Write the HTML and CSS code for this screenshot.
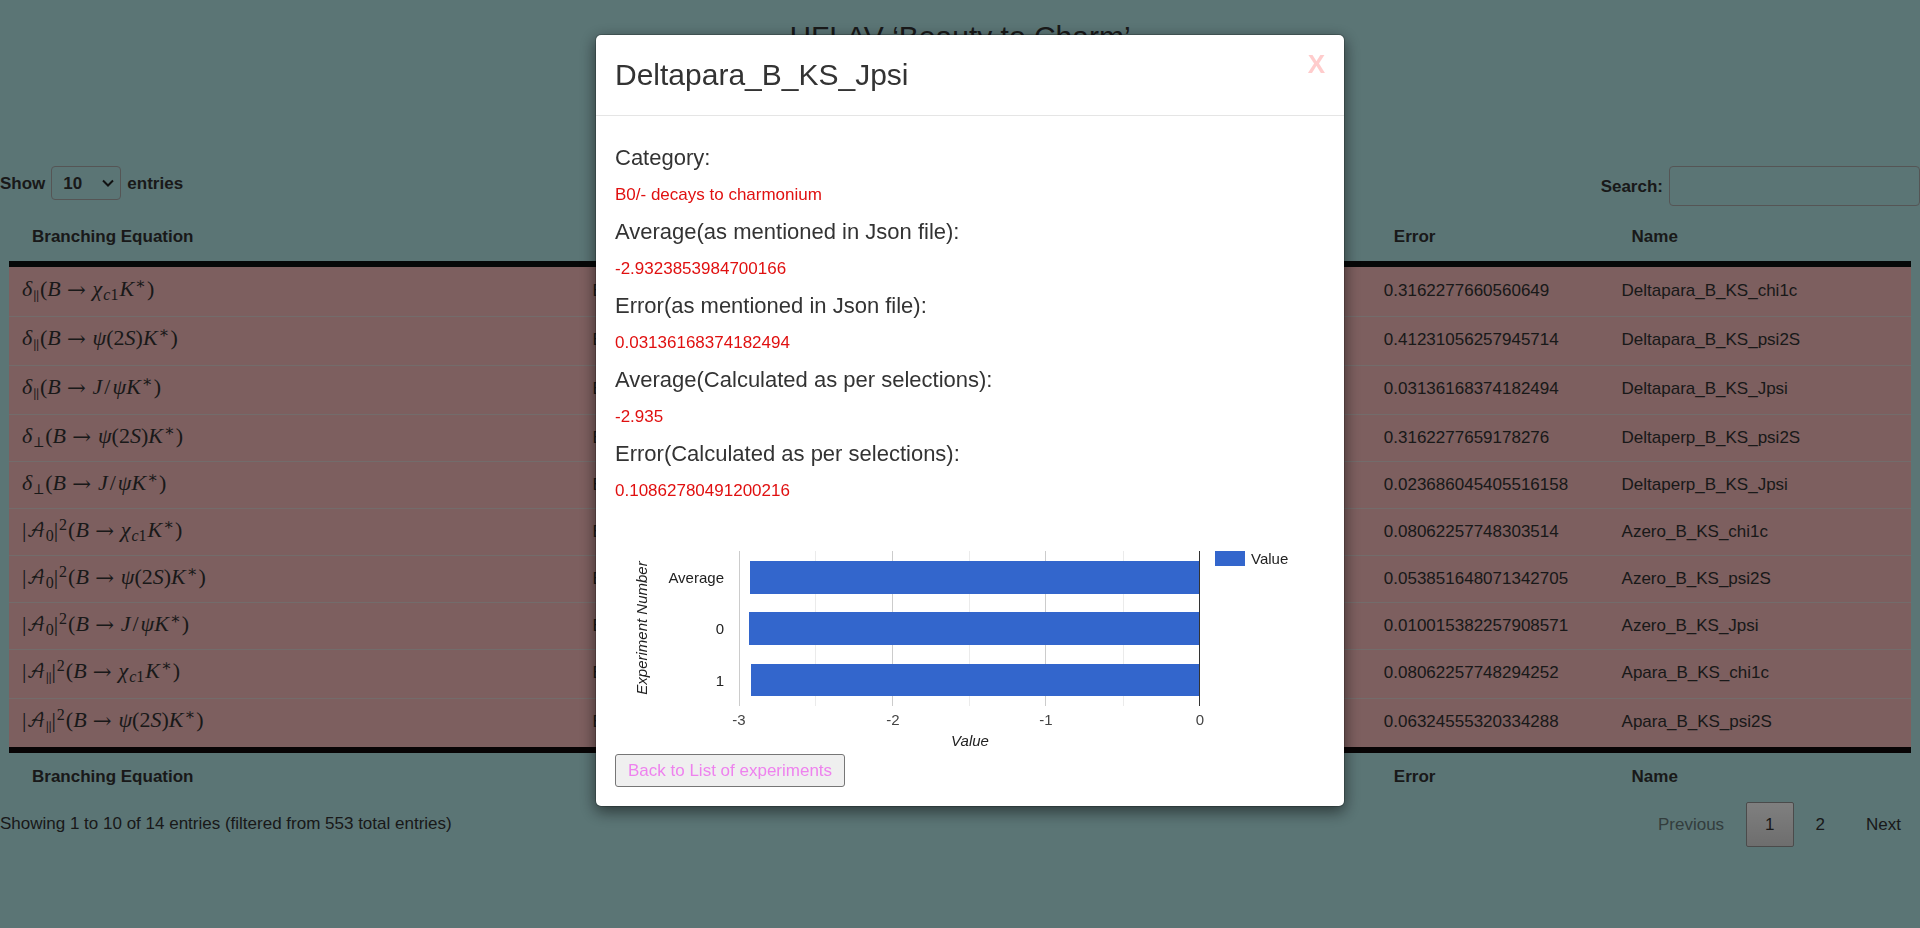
FILE: index.html
```html
<!DOCTYPE html>
<html lang="en">
<head>
<meta charset="utf-8">
<title>HFLAV ‘Beauty to Charm’</title>
<meta name="viewport" content="width=device-width, initial-scale=1">
<link rel="stylesheet" href="styles.css">
</head>
<body>
<main class="page">
  <header class="page-header"><h1>HFLAV ‘Beauty to Charm’</h1></header>

  <div class="controls">
    <label class="length">Show
      <select class="length-select"><option>10</option><option>25</option><option>50</option></select>
      entries</label>
    <label class="filter">Search:<input class="filter-input" type="search"></label>
  </div>

  <table class="results">
    <colgroup><col class="c-eq"><col class="c-cat"><col class="c-avg"><col class="c-err"><col class="c-name"></colgroup>
    <thead><tr><th>Branching Equation</th><th>Category</th><th>Average</th><th>Error</th><th>Name</th></tr></thead>
    <tbody>
      <tr class="tall"><td><span class="eq"><i>δ</i><sub class="sym">∥</sub>(<i>B</i><span class="to">→</span><i>χ</i><sub><i>c</i>1</sub><i>K</i><sup>∗</sup>)</span></td><td>B0/- decays to charmonium</td><td></td><td>0.3162277660560649</td><td>Deltapara_B_KS_chi1c</td></tr>
      <tr class="tall"><td><span class="eq"><i>δ</i><sub class="sym">∥</sub>(<i>B</i><span class="to">→</span><i>ψ</i>(2<i>S</i>)<i>K</i><sup>∗</sup>)</span></td><td>B0/- decays to charmonium</td><td></td><td>0.41231056257945714</td><td>Deltapara_B_KS_psi2S</td></tr>
      <tr class="tall"><td><span class="eq"><i>δ</i><sub class="sym">∥</sub>(<i>B</i><span class="to">→</span><i>J</i><span class="slash">/</span><i>ψK</i><sup>∗</sup>)</span></td><td>B0/- decays to charmonium</td><td>-2.9323853984700166</td><td>0.03136168374182494</td><td>Deltapara_B_KS_Jpsi</td></tr>
      <tr><td><span class="eq"><i>δ</i><sub class="sym">⊥</sub>(<i>B</i><span class="to">→</span><i>ψ</i>(2<i>S</i>)<i>K</i><sup>∗</sup>)</span></td><td>B0/- decays to charmonium</td><td></td><td>0.3162277659178276</td><td>Deltaperp_B_KS_psi2S</td></tr>
      <tr><td><span class="eq"><i>δ</i><sub class="sym">⊥</sub>(<i>B</i><span class="to">→</span><i>J</i><span class="slash">/</span><i>ψK</i><sup>∗</sup>)</span></td><td>B0/- decays to charmonium</td><td></td><td>0.023686045405516158</td><td>Deltaperp_B_KS_Jpsi</td></tr>
      <tr><td><span class="eq">|<span class="script">𝒜</span><sub>0</sub>|<sup>2</sup>(<i>B</i><span class="to">→</span><i>χ</i><sub><i>c</i>1</sub><i>K</i><sup>∗</sup>)</span></td><td>B0/- decays to charmonium</td><td></td><td>0.08062257748303514</td><td>Azero_B_KS_chi1c</td></tr>
      <tr><td><span class="eq">|<span class="script">𝒜</span><sub>0</sub>|<sup>2</sup>(<i>B</i><span class="to">→</span><i>ψ</i>(2<i>S</i>)<i>K</i><sup>∗</sup>)</span></td><td>B0/- decays to charmonium</td><td></td><td>0.053851648071342705</td><td>Azero_B_KS_psi2S</td></tr>
      <tr><td><span class="eq">|<span class="script">𝒜</span><sub>0</sub>|<sup>2</sup>(<i>B</i><span class="to">→</span><i>J</i><span class="slash">/</span><i>ψK</i><sup>∗</sup>)</span></td><td>B0/- decays to charmonium</td><td></td><td>0.010015382257908571</td><td>Azero_B_KS_Jpsi</td></tr>
      <tr class="tall"><td><span class="eq">|<span class="script">𝒜</span><sub class="sym">∥</sub>|<sup>2</sup>(<i>B</i><span class="to">→</span><i>χ</i><sub><i>c</i>1</sub><i>K</i><sup>∗</sup>)</span></td><td>B0/- decays to charmonium</td><td></td><td>0.08062257748294252</td><td>Apara_B_KS_chi1c</td></tr>
      <tr class="tall"><td><span class="eq">|<span class="script">𝒜</span><sub class="sym">∥</sub>|<sup>2</sup>(<i>B</i><span class="to">→</span><i>ψ</i>(2<i>S</i>)<i>K</i><sup>∗</sup>)</span></td><td>B0/- decays to charmonium</td><td></td><td>0.06324555320334288</td><td>Apara_B_KS_psi2S</td></tr>
    </tbody>
    <tfoot><tr><th>Branching Equation</th><th>Category</th><th>Average</th><th>Error</th><th>Name</th></tr></tfoot>
  </table>

  <div class="table-footer">
    <div class="info">Showing 1 to 10 of 14 entries (filtered from 553 total entries)</div>
    <nav class="pagination" aria-label="Pages">
      <button class="page-button disabled" type="button" disabled>Previous</button>
      <button class="page-button current" type="button" aria-current="page">1</button>
      <button class="page-button" type="button">2</button>
      <button class="page-button" type="button">Next</button>
    </nav>
  </div>
</main>

<div class="backdrop">
  <section class="modal" role="dialog" aria-modal="true" aria-labelledby="modal-title">
    <header class="modal-header">
      <h2 class="modal-title" id="modal-title">Deltapara_B_KS_Jpsi</h2>
      <button class="close" type="button" aria-label="Close">X</button>
    </header>
    <div class="modal-body">
      <dl class="details">
        <dt>Category:</dt><dd>B0/- decays to charmonium</dd>
        <dt>Average(as mentioned in Json file):</dt><dd>-2.9323853984700166</dd>
        <dt>Error(as mentioned in Json file):</dt><dd>0.03136168374182494</dd>
        <dt>Average(Calculated as per selections):</dt><dd>-2.935</dd>
        <dt>Error(Calculated as per selections):</dt><dd>0.10862780491200216</dd>
      </dl>
      <svg class="chart" viewBox="0 0 710 227" role="img" aria-label="Value by experiment number">
        <g class="grid-minor">
          <rect x="200" y="24" width="1" height="155"/><rect x="354" y="24" width="1" height="155"/><rect x="508" y="24" width="1" height="155"/>
        </g>
        <g class="grid-major">
          <rect x="124" y="24" width="1" height="155"/><rect x="277" y="24" width="1" height="155"/><rect x="430" y="24" width="1" height="155"/>
        </g>
        <g class="bars">
          <rect x="135" y="34" width="449" height="33"/>
          <rect x="134" y="85" width="450" height="33"/>
          <rect x="136" y="137" width="448" height="32"/>
          <rect x="600" y="24" width="30" height="15"/>
        </g>
        <rect class="baseline" x="584" y="24" width="1" height="155"/>
        <g class="category" text-anchor="end">
          <text x="109" y="56">Average</text><text x="109" y="107">0</text><text x="109" y="159">1</text>
        </g>
        <g class="tick" text-anchor="middle">
          <text x="124" y="198">-3</text><text x="278" y="198">-2</text><text x="431" y="198">-1</text><text x="585" y="198">0</text>
        </g>
        <text class="category" x="636" y="37">Value</text>
        <text class="axis-title" x="355" y="219" text-anchor="middle">Value</text>
        <text class="axis-title" transform="translate(32 101) rotate(-90)" text-anchor="middle">Experiment Number</text>
      </svg>
      <button class="back" type="button">Back to List of experiments</button>
    </div>
  </section>
</div>
</body>
</html>
```
FILE: styles.css
```css
* { box-sizing: border-box; }
body {
  margin: 0;
  min-height: 100vh;
  background: #b6eaeb;
  color: #333;
  font: 17px/25px "Liberation Sans", Arial, sans-serif;
}
button, input, select { font: inherit; color: inherit; }

.page-header { height: 166px; padding-top: 16px; text-align: center; }
.page-header h1 { margin: 0; font-size: 30px; line-height: 42px; font-weight: 400; }

.controls { display: flex; justify-content: space-between; align-items: flex-start; }
.length, .filter { display: flex; align-items: center; gap: 6px; font-weight: 700; }
.length-select {
  width: 70px;
  height: 34px;
  padding: 0 11px;
  border: 1px solid #aaa;
  border-radius: 4px;
  background: transparent url("data:image/svg+xml,%3Csvg xmlns='http://www.w3.org/2000/svg' width='12' height='8'%3E%3Cpath d='M1 1.5l5 5 5-5' fill='none' stroke='%23222' stroke-width='2'/%3E%3C/svg%3E") no-repeat right 6px center;
  appearance: none;
}
.filter-input { width: 251px; height: 40px; border: 1px solid #aaa; border-radius: 4px; background: transparent; }

.results { width: calc(100% - 18px); margin: 4px 9px 0; border-spacing: 0; table-layout: fixed; }
.c-eq { width: 30%; }
.c-cat { width: 29.6%; }
.c-avg { width: 12%; }
.c-err { width: 12.5%; }
.c-name { width: 15.9%; }
.results th { padding: 14px 23px 12px; text-align: left; }
.results thead th { border-bottom: 6px solid #0c1010; }
.results tfoot th { padding-top: 11px; padding-bottom: 13px; border-top: 6px solid #10090a; }
.results tbody tr { height: 47px; background: #fabebe; }
.results tbody .tall { height: 49px; }
.results td { padding: 10px 13px 0; border-top: 1px solid #e6d8d6; vertical-align: top; white-space: nowrap; }
.results tbody tr:first-child td { border-top-color: transparent; }

.eq { font-family: "Liberation Serif", "DejaVu Serif", serif; font-size: 22px; line-height: 0; }
.eq sub, .eq sup { font-size: 16px; line-height: 0; padding: 0 1px; }
.eq sub { vertical-align: -4px; }
.eq sup { vertical-align: 7px; }
.eq .sym { font-family: "DejaVu Math TeX Gyre", serif; font-size: 14px; }
.eq .to { margin: 0 6px; font-family: "DejaVu Math TeX Gyre", serif; font-size: 20px; }
.eq .slash { margin: 0 2px; }
.eq .script { font-family: "DejaVu Math TeX Gyre", "DejaVu Serif", serif; font-size: 18px; }
.eq .script + sub { padding: 0; }

.table-footer { display: flex; justify-content: space-between; align-items: flex-start; }
.info { padding-top: 9px; }
.pagination { display: flex; gap: 3px; }
.page-button { height: 45px; padding: 0 18px; border: 1px solid transparent; border-radius: 2px; background: transparent; }
.page-button.current { border-color: #979797; background: linear-gradient(#fff, #dcdcdc); }
.page-button.disabled { color: #667a7a; }

.backdrop {
  position: fixed;
  inset: 0;
  padding: 34px 0 34px 20px;
  background: rgba(0, 0, 0, .5);
  overflow: auto;
}
.modal {
  width: 750px;
  max-width: 100%;
  margin: 0 auto;
  border: 1px solid rgba(0, 0, 0, .2);
  border-radius: 6px;
  background: #fff;
  background-clip: padding-box;
  box-shadow: 0 5px 15px rgba(0, 0, 0, .5);
}
.modal-header {
  display: flex;
  justify-content: space-between;
  align-items: flex-start;
  padding: 19px;
  border-bottom: 1px solid #e5e5e5;
}
.modal-title { margin: 0; font-size: 30px; line-height: 42px; font-weight: 400; }
.close { margin-top: -2px; padding: 0; border: 0; background: none; color: #fcc; font-size: 26px; line-height: 24px; font-weight: 700; }
.modal-body { padding: 30px 19px 19px; }
.details { margin: 0; }
.details dt { font-size: 22px; line-height: 24px; }
.details dd { margin: 12px 0 13px; color: #e01010; }
.chart { display: block; width: 100%; margin-top: 24px; font-size: 15px; }
.grid-minor { fill: #ebebeb; }
.grid-major { fill: #ccc; }
.bars { fill: #36c; }
.baseline { fill: #333; }
.category { fill: #222; }
.tick { fill: #444; }
.axis-title { fill: #222; font-style: italic; }
.back { display: block; height: 33px; padding: 0 12px; border: 1px solid #767676; border-radius: 3px; background: #efefef; color: #ee82ee; }
```
